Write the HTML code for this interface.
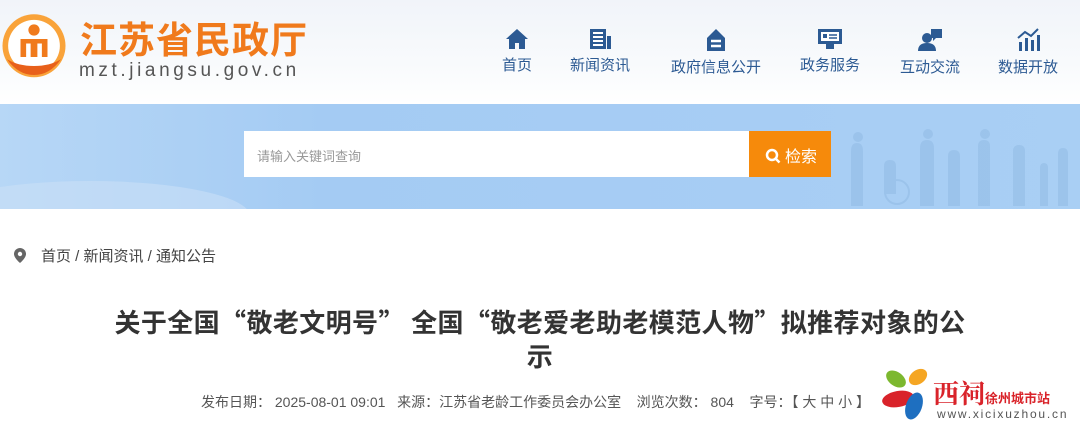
<!DOCTYPE html>
<html><head><meta charset="utf-8"><style>
*{margin:0;padding:0;box-sizing:border-box}
body{width:1080px;height:428px;overflow:hidden;background:#fff;font-family:"Liberation Sans","Noto Sans CJK SC",sans-serif;position:relative}
.hdr{position:absolute;left:0;top:0;width:1080px;height:104px;background:linear-gradient(180deg,#f1f4f9 0%,#f8fafc 60%,#fff 100%)}
.logo{position:absolute;left:0;top:12px;width:68px;height:72px}
.ttl{position:absolute;left:80px;top:14px;font-size:37px;font-weight:bold;color:#f07a1c;letter-spacing:1px;font-family:"Noto Sans CJK SC",sans-serif;line-height:46px}
.url{position:absolute;left:79px;top:60px;font-size:19px;color:#555;letter-spacing:3.6px}
.nav{position:absolute;top:28px;text-align:center;font-size:15px;color:#2c5a93;font-family:"Noto Sans CJK SC",sans-serif}
.nav svg{display:block;margin:0 auto 4px}
.ban{position:absolute;left:0;top:104px;width:1080px;height:105px;background:linear-gradient(90deg,#b7d7f6 0%,#a4cbf3 30%,#a7cdf4 70%,#a9cff4 100%)}
.sb{position:absolute;left:244px;top:131px;width:505px;height:46px;background:#fff;font-size:13px;color:#999;padding:15px 0 0 13px}
.btn{position:absolute;left:749px;top:131px;width:82px;height:46px;background:#f68a0b;color:#fff;font-size:16px;padding:12px 0 0 16px}
.crumb{position:absolute;left:14px;top:245px;font-size:15px;color:#444}
.h1{position:absolute;left:0;width:1080px;text-align:center;font-size:26px;font-weight:bold;color:#333;font-family:"Noto Sans CJK SC",sans-serif;line-height:34px;letter-spacing:0.4px}
.meta{position:absolute;left:201px;top:392px;font-size:14px;color:#555;white-space:nowrap}
</style></head><body>
<div class="hdr"></div>
<svg class="logo" viewBox="0 0 60 64"><circle cx="30" cy="30" r="28" fill="#f9a33a"/><circle cx="30" cy="30" r="23" fill="#fff"/><circle cx="30" cy="16" r="5" fill="#f07a1c"/><path d="M18 24h24v16h-5v-12h-4v12h-6v-12h-4v12h-5z" fill="#f07a1c"/><path d="M6 42q10 14 24 14q14 0 24-14q-10 6-24 6q-14 0-24-6z" fill="#e8601a"/></svg>
<div class="ttl">江苏省民政厅</div>
<div class="url">mzt.jiangsu.gov.cn</div>
<div class="nav" style="left:500px;width:34px"><svg width="24" height="22" viewBox="0 0 24 22"><path d="M12 1L1 11h3v10h6v-6h4v6h6V11h3z" fill="#2c5a93"/></svg>首页</div>
<div class="nav" style="left:568px;width:64px"><svg width="26" height="22" viewBox="0 0 26 22"><path d="M3 1h16v20H3z M20 8h4v13h-4z" fill="#2c5a93"/><path d="M6 5h10M6 9h10M6 13h10M6 17h10" stroke="#fff" stroke-width="2"/></svg>新闻资讯</div>
<div class="nav" style="left:668px;width:96px"><svg width="24" height="24" viewBox="0 0 24 24"><path d="M12 1L3 10v13h18V10z" fill="#2c5a93"/><path d="M7 13h10M7 18h10" stroke="#fff" stroke-width="2.5"/></svg>政府信息公开</div>
<div class="nav" style="left:798px;width:64px"><svg width="26" height="22" viewBox="0 0 26 22"><rect x="1" y="1" width="24" height="15" fill="#2c5a93"/><rect x="4" y="4" width="18" height="9" fill="#fff"/><rect x="6" y="6" width="4" height="4" fill="#2c5a93"/><path d="M12 7h8M12 10h8" stroke="#2c5a93" stroke-width="1.5"/><path d="M9 21h8v-5H9z" fill="#2c5a93"/></svg>政务服务</div>
<div class="nav" style="left:898px;width:64px"><svg width="26" height="24" viewBox="0 0 26 24"><circle cx="10" cy="10" r="5" fill="#2c5a93"/><path d="M1 23q0-8 9-8q9 0 9 8z" fill="#2c5a93"/><path d="M14 1h11v9h-6l-3 3v-3h-2z" fill="#2c5a93"/></svg>互动交流</div>
<div class="nav" style="left:996px;width:64px"><svg width="26" height="24" viewBox="0 0 26 24"><path d="M4 14h3v9H4zM10 10h3v13h-3zM16 12h3v11h-3zM22 7h3v16h-3z" fill="#2c5a93"/><path d="M3 10l7-6 6 4 7-7" stroke="#2c5a93" stroke-width="2" fill="none"/></svg>数据开放</div>
<div class="ban"><svg width="1080" height="105" style="position:absolute;left:0;top:0"><g fill="#94bde6" opacity=".6"><path d="M851 102v-55q0-8 6-8q6 0 6 8v55z"/><circle cx="858" cy="33" r="5"/><path d="M920 102v-58q0-8 7-8q7 0 7 8v58z"/><circle cx="928" cy="30" r="5"/><path d="M948 102v-50q0-6 6-6q6 0 6 6v50z"/><path d="M978 102v-60q0-6 6-6q6 0 6 6v60z"/><circle cx="985" cy="30" r="5"/><path d="M1013 102v-55q0-6 6-6q6 0 6 6v55z"/><path d="M1040 102v-38q0-5 4-5q4 0 4 5v38z"/><path d="M1058 102v-52q0-6 5-6q5 0 5 6v52z"/><circle cx="897" cy="88" r="12" fill="none" stroke="#94bde6" stroke-width="2"/><path d="M884 90v-28q0-6 6-6q6 0 6 6v28z"/></g><ellipse cx="90" cy="112" rx="160" ry="35" fill="#c9e0f7" opacity=".6"/></svg></div>
<div class="sb">请输入关键词查询</div>
<div class="btn"><svg width="16" height="16" viewBox="0 0 16 16" style="vertical-align:-2px;margin-right:4px"><circle cx="7" cy="7" r="5" stroke="#fff" stroke-width="2.5" fill="none"/><path d="M10.5 10.5l4 4" stroke="#fff" stroke-width="2.5"/></svg>检索</div>
<div class="crumb"><svg width="12" height="15" viewBox="0 0 12 15" style="vertical-align:-2px;margin-right:15px"><path d="M6 0a6 6 0 0 1 6 6c0 4-6 9-6 9S0 10 0 6a6 6 0 0 1 6-6z" fill="#666"/><circle cx="6" cy="6" r="2.2" fill="#fff"/></svg>首页 / 新闻资讯 / 通知公告</div>
<div class="h1" style="top:305px">关于全国“敬老文明号” 全国“敬老爱老助老模范人物”拟推荐对象的公</div>
<div class="h1" style="top:339px">示</div>
<div class="meta">发布日期：&nbsp;2025-08-01 09:01&nbsp;&nbsp; 来源：江苏省老龄工作委员会办公室&nbsp;&nbsp;&nbsp; 浏览次数：&nbsp;804&nbsp;&nbsp;&nbsp; 字号：【 大 中 小 】</div>
<svg style="position:absolute;left:878px;top:364px" width="60" height="60" viewBox="0 0 60 60"><ellipse cx="18" cy="15" rx="11" ry="7" fill="#7cb82f" transform="rotate(35 18 15)"/><ellipse cx="40" cy="13" rx="10" ry="7" fill="#f5a623" transform="rotate(-35 40 13)"/><ellipse cx="20" cy="35" rx="16" ry="8" fill="#d9232a" transform="rotate(-10 20 35)"/><ellipse cx="36" cy="42" rx="8" ry="14" fill="#1e6fc0" transform="rotate(20 36 42)"/></svg>
<div style="position:absolute;left:933px;top:380px;font-size:26px;font-weight:bold;color:#d9232a;line-height:26px;font-family:'Noto Serif CJK SC',serif">西祠<span style="font-size:13px;font-family:'Noto Sans CJK SC',sans-serif">徐州城市站</span></div>
<div style="position:absolute;left:937px;top:407px;font-size:12px;color:#555;letter-spacing:1.8px">www.xicixuzhou.cn</div>
</body></html>
